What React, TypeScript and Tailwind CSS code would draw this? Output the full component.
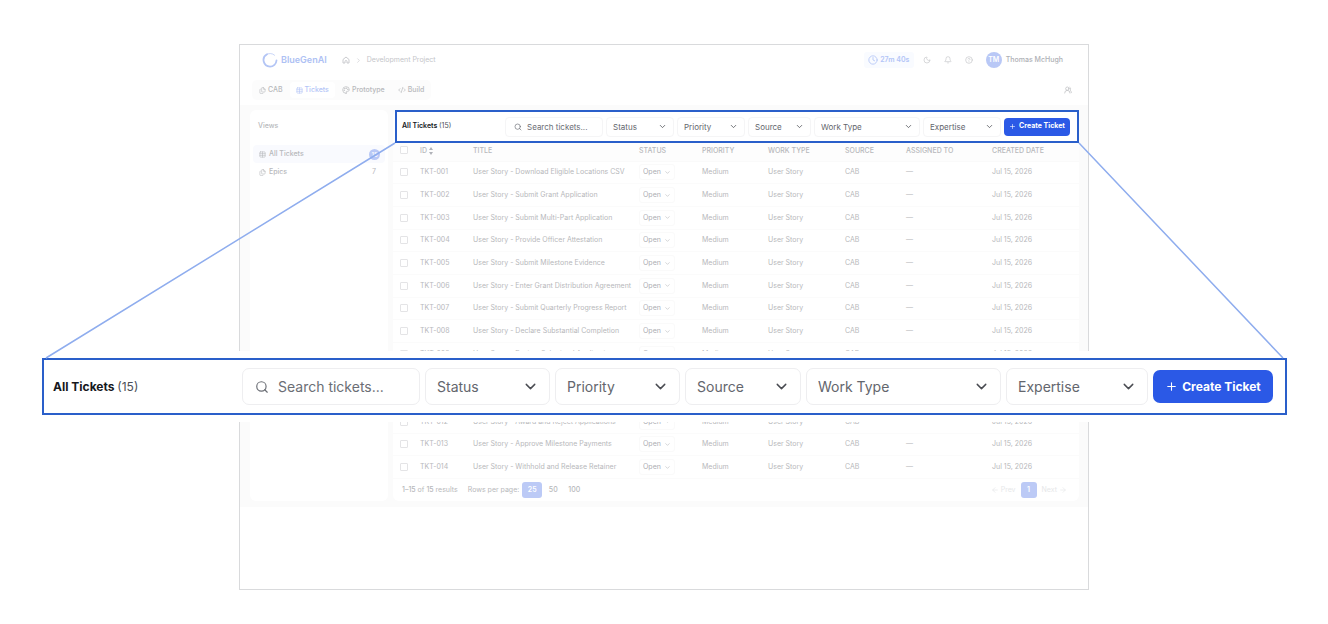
import { ArrowLeft, ArrowRight, Bell, ChevronDown, ChevronRight, CircleHelp, Clock, CodeXml, Files, House, Moon, Palette, Plus, Search, Table, UsersRound } from "lucide-react";

type Size = "sm" | "lg";

const filters = [
  { label: "Status", sm: "w-[68px]", lg: "w-[125px]" },
  { label: "Priority", sm: "w-[68px]", lg: "w-[125px]" },
  { label: "Source", sm: "w-[63px]", lg: "w-[116px]" },
  { label: "Work Type", sm: "w-[106px]", lg: "w-[195px]" },
  { label: "Expertise", sm: "w-[78px]", lg: "w-[142px]" },
];

const toolbarStyles = {
  sm: {
    bar: "h-[33px] gap-[3px] pl-[5px] pr-[7px]",
    title: "text-[7px] font-semibold",
    search: "w-[98px] h-[20px] rounded-[4px] border-[#f5f5f6] pl-[8px] gap-[5px] text-[8px]",
    searchIcon: 8,
    select: "h-[20px] rounded-[4px] border-[#f5f5f6] pl-[6px] text-[8px]",
    chevron: "right-[7px] size-[9px]",
    button: "h-[18px] w-[66px] rounded-[4px] gap-[3px] text-[7px]",
    plus: 7,
  },
  lg: {
    bar: "h-[57px] gap-[5px] pl-[9px] pr-[12px]",
    title: "text-[12px] font-bold",
    search: "w-[178px] h-[37px] rounded-[7px] border-[#eeeef0] pl-[12px] gap-[9px] text-[14px]",
    searchIcon: 14,
    select: "h-[37px] rounded-[7px] border-[#eeeef0] pl-[11px] text-[14px]",
    chevron: "right-[11px] size-[17px]",
    button: "h-[33px] w-[120px] rounded-[7px] gap-[4px] text-[12px]",
    plus: 13,
  },
};

function Toolbar({ size }: { size: Size }) {
  const s = toolbarStyles[size];
  return (
    <div className={`flex items-center border-2 border-[#2a5fca] bg-white ${s.bar}`}>
      <h2 className={`mr-auto text-[#16181d] ${s.title}`}>
        All Tickets <span className="font-normal text-[#4b4f57]">(15)</span>
      </h2>
      <label className={`flex items-center border text-[#6b6e75] ${s.search}`}>
        <Search size={s.searchIcon} strokeWidth={2} className="shrink-0" />
        <input
          type="text"
          aria-label="Search tickets"
          placeholder="Search tickets..."
          className="w-full min-w-0 bg-transparent outline-none placeholder:text-[#6b6e75]"
        />
      </label>
      {filters.map((f) => (
        <div key={f.label} className={`relative ${f[size]}`}>
          <select
            aria-label={f.label}
            className={`block w-full appearance-none border bg-white text-[#63666d] ${s.select}`}
          >
            <option>{f.label}</option>
          </select>
          <ChevronDown className={`pointer-events-none absolute inset-y-0 my-auto text-[#4a4c52] ${s.chevron}`} />
        </div>
      ))}
      <button
        type="button"
        className={`flex items-center justify-center whitespace-nowrap bg-[#2b59e6] font-bold text-white ${s.button}`}
      >
        <Plus size={s.plus} strokeWidth={2} />
        Create Ticket
      </button>
    </div>
  );
}

const titles = [
  "Download Eligible Locations CSV",
  "Submit Grant Application",
  "Submit Multi-Part Application",
  "Provide Officer Attestation",
  "Submit Milestone Evidence",
  "Enter Grant Distribution Agreement",
  "Submit Quarterly Progress Report",
  "Declare Substantial Completion",
  "Review Submitted Applications",
  "Score Submitted Applications",
  "Request Application Changes",
  "Award and Reject Applications",
  "Approve Milestone Payments",
  "Withhold and Release Retainer",
];

const columns = [
  { label: "ID", width: "w-[53px]" },
  { label: "TITLE", width: "w-[166px]" },
  { label: "STATUS", width: "w-[63px]" },
  { label: "PRIORITY", width: "w-[66px]" },
  { label: "WORK TYPE", width: "w-[77px]" },
  { label: "SOURCE", width: "w-[61px]" },
  { label: "ASSIGNED TO", width: "w-[86px]" },
  { label: "CREATED DATE", width: "" },
];

function Tick({ label }: { label: string }) {
  return (
    <input
      type="checkbox"
      aria-label={label}
      className="block size-[8px] appearance-none rounded-[1px] border border-[#e4e4e6] bg-white"
    />
  );
}

function TicketTable() {
  return (
    <table className="h-[336px] w-full table-fixed border-collapse text-left text-[7px] leading-[10px] text-[#b7b8bb]">
      <thead className="bg-[#fdfdfd]">
        <tr className="h-[18px] border-b border-[#fafafa] align-top">
          <th className="w-[27px] pl-[7px] pt-[3px]">
            <Tick label="Select all tickets" />
          </th>
          {columns.map((c) => (
            <th key={c.label} className={`whitespace-nowrap pt-[3px] font-medium ${c.width}`}>
              {c.label === "ID" ? (
                <span className="flex items-center gap-[2px]">
                  ID
                  <svg viewBox="0 0 4 8" className="h-[8px] w-[4px]" fill="#b0b2b8">
                    <path d="M2 0 4 3H0ZM2 8 0 5H4Z" />
                  </svg>
                </span>
              ) : (
                c.label
              )}
            </th>
          ))}
        </tr>
      </thead>
      <tbody>
        {titles.map((title, i) => {
          const id = `TKT-${String(i + 1).padStart(3, "0")}`;
          return (
            <tr key={id} className="border-b border-[#fbfbfb]">
              <td className="pl-[7px]">
                <Tick label={`Select ${id}`} />
              </td>
              <td>{id}</td>
              <td className="whitespace-nowrap">User Story - {title}</td>
              <td>
                <div className="relative w-[36px]">
                  <select
                    aria-label={`${id} status`}
                    className="block h-[16px] w-full appearance-none rounded-[3px] border border-[#fafafa] bg-white pl-[3px] text-[7px] text-[#acaeb3]"
                  >
                    <option>Open</option>
                  </select>
                  <ChevronDown className="pointer-events-none absolute inset-y-0 right-[4px] my-auto size-[7px] text-[#b7b8bb]" />
                </div>
              </td>
              <td>Medium</td>
              <td>User Story</td>
              <td>CAB</td>
              <td>—</td>
              <td>Jul 15, 2026</td>
            </tr>
          );
        })}
      </tbody>
    </table>
  );
}

function Header() {
  return (
    <header className="flex h-[30px] items-center pl-[22px] pr-[25px] text-[7px] text-[#c4c5c9]">
      <a href="#" className="flex items-center gap-[3px] text-[9px] font-semibold text-[#aec1f4]">
        <svg viewBox="0 0 16 16" className="size-[16px]" fill="none" stroke="#b3c5f5" strokeLinecap="round">
          <path d="M12.6 3.2A6.600 6.600 0 0 0 4 2.800" strokeWidth="1" opacity=".7" />
          <path d="M5 2.200A6.600 6.600 0 0 0 8 14.600A6.600 6.600 0 0 0 14.500 8.500" strokeWidth="1.800" />
        </svg>
        BlueGenAI
      </a>
      <nav className="ml-[15px] flex items-center gap-[5px]">
        <a href="#" aria-label="Home">
          <svg viewBox="0 0 16 16" className="size-[8px]" fill="none" stroke="currentColor" strokeWidth="1.800">
            <path d="M2 7 8 2l6 5v7h-4v-3a2 2 0 0 0-4 0v3H2Z" />
          </svg>
        </a>
        <ChevronRight size={7} />
        <a href="#">Development Project</a>
      </nav>
      <div className="ml-auto flex items-center gap-[13px]">
        <span className="-mr-[4px] flex h-[16px] w-[50px] items-center justify-center gap-[2px] rounded-[3px] bg-[#f9fbff] text-[7px] font-semibold text-[#b3c5f7]">
          <Clock size={10} />
          27m 40s
        </span>
        <button type="button" aria-label="Dark mode">
          <Moon size={8} />
        </button>
        <button type="button" aria-label="Notifications">
          <Bell size={8} />
        </button>
        <button type="button" aria-label="Help">
          <CircleHelp size={8} />
        </button>
        <button type="button" className="flex items-center gap-[4px] font-medium text-[#aeb0b5]">
          <span className="flex size-[16px] items-center justify-center rounded-full bg-[#b9c8f6] font-semibold text-white">
            TM
          </span>
          Thomas McHugh
        </button>
      </div>
    </header>
  );
}

function Tabs() {
  return (
    <div className="flex h-[30px] items-center justify-between pl-[12px] pr-[16px] text-[7px] font-medium text-[#b7b8bb]">
      <nav className="flex h-[20px] items-center gap-[1px] rounded-[5px] bg-[#fcfcfc] px-[1px]">
        <a href="#" className="flex h-[16px] items-center gap-[2px] px-[6px]">
          <Files size={7} />
          CAB
        </a>
        <a href="#" className="flex h-[16px] items-center gap-[2px] rounded-[4px] bg-white px-[6px] text-[#b3c5f7]">
          <Table size={7} />
          Tickets
        </a>
        <a href="#" className="flex h-[16px] items-center gap-[2px] px-[6px]">
          <Palette size={8} />
          Prototype
        </a>
        <a href="#" className="flex h-[16px] items-center gap-[2px] px-[6px]">
          <CodeXml size={8} />
          Build
        </a>
      </nav>
      <button type="button" aria-label="Members">
        <UsersRound size={8} />
      </button>
    </div>
  );
}

function Sidebar() {
  return (
    <aside className="w-[138px] rounded-[6px] bg-white text-[7px] text-[#b7b8bb]">
      <h3 className="mb-[3px] flex h-[32px] items-center pl-[8px] font-medium">Views</h3>
      <a href="#" className="mx-[3px] flex h-[18px] items-center gap-[3px] rounded-[4px] bg-[#f9fafe] pl-[6px] pr-[5px] font-medium">
        <Table size={7} />
        All Tickets
        <span className="ml-auto flex size-[11px] items-center justify-center rounded-full bg-[#b9c8f6] text-[6px] text-white">15</span>
      </a>
      <a href="#" className="mx-[3px] flex h-[18px] items-center gap-[3px] pl-[6px] pr-[9px] font-medium">
        <Files size={7} />
        Epics
        <span className="ml-auto font-normal">7</span>
      </a>
    </aside>
  );
}

function Pagination() {
  return (
    <footer className="flex h-[22px] items-center pl-[9px] pr-[12px] text-[7px] text-[#b7b8bb]">
      <span>
        <b className="font-medium">1–15</b> of <b className="font-medium">15</b> results
      </span>
      <span className="ml-[10px]">Rows per page:</span>
      <button type="button" className="ml-[3px] h-[16px] w-[20px] rounded-[3px] bg-[#bccaf6] font-semibold text-white">
        25
      </button>
      <button type="button" className="w-[22px] font-medium">
        50
      </button>
      <button type="button" className="w-[20px] font-medium">
        100
      </button>
      <button type="button" className="ml-auto flex items-center gap-[2px] text-[#e6e7e9]">
        <ArrowLeft size={8} />
        Prev
      </button>
      <button type="button" className="mx-[5px] size-[16px] rounded-[3px] bg-[#bccaf6] font-semibold text-white">
        1
      </button>
      <button type="button" className="flex items-center gap-[2px] text-[#e6e7e9]">
        Next
        <ArrowRight size={8} />
      </button>
    </footer>
  );
}

export default function App() {
  return (
    <div className="relative min-h-screen bg-white py-[44px] font-['Inter',sans-serif]">
      <main className="mx-[239px] min-h-[546px] border border-[#d9dadc]">
        <Header />
        <Tabs />
        <div className="flex gap-[5px] bg-[#fbfbfb] pb-[6px] pl-[10px] pr-[9px] pt-[5px]">
          <Sidebar />
          <section className="min-w-0 flex-1 rounded-[6px] bg-white">
            <div className="ml-[2px]">
              <Toolbar size="sm" />
            </div>
            <TicketTable />
            <Pagination />
          </section>
        </div>
      </main>
      <div className="absolute inset-x-0 top-[351px] bg-white py-[7px] pl-[42px] pr-[41px]">
        <Toolbar size="lg" />
      </div>
      <svg
        className="pointer-events-none absolute left-0 top-0 h-[624px] w-full"
        viewBox="0 0 1328 624"
        preserveAspectRatio="none"
        fill="none"
        stroke="#8fadee"
        strokeWidth="1.500"
      >
        <path d="M395 143 46 358M1079 143 1283 358" />
      </svg>
    </div>
  );
}
